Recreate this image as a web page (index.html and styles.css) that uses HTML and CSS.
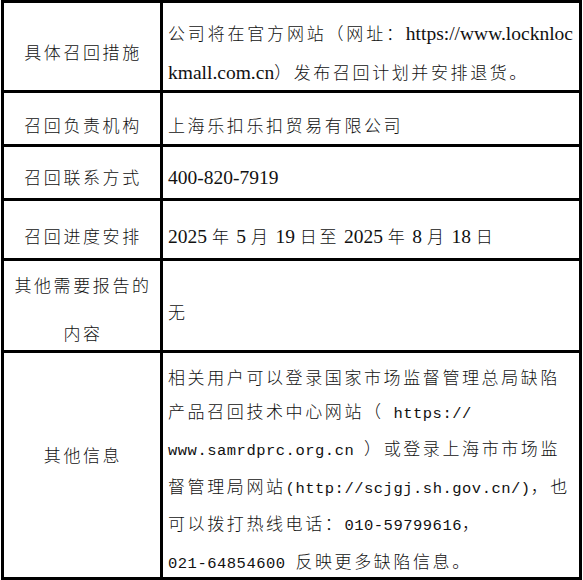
FILE: index.html
```html
<!DOCTYPE html>
<html lang="zh-CN">
<head>
<meta charset="utf-8">
<title>召回信息</title>
<link rel="stylesheet" href="styles.css">
</head>
<body>
<div class="sheet">
  <div class="cell label r1">具体召回措施</div>
  <div class="cell content r1">
    <div class="line just">公司将在官方网站（网址：<span class="tn">https://www.locknloc</span></div>
    <div class="line"><span class="tn">kmall.com.cn</span>）发布召回计划并安排退货。</div>
  </div>

  <div class="cell label r2">召回负责机构</div>
  <div class="cell content r2"><div class="line">上海乐扣乐扣贸易有限公司</div></div>

  <div class="cell label r3">召回联系方式</div>
  <div class="cell content r3"><div class="line"><span class="tn">400-820-7919</span></div></div>

  <div class="cell label r4">召回进度安排</div>
  <div class="cell content r4"><div class="line"><span class="tn">2025 </span>年<span class="tn"> 5 </span>月<span class="tn"> 19 </span>日至<span class="tn"> 2025 </span>年<span class="tn"> 8 </span>月<span class="tn"> 18 </span>日</div></div>

  <div class="cell label r5">
    <div class="line">其他需要报告的</div>
    <div class="line">内容</div>
  </div>
  <div class="cell content r5"><div class="line">无</div></div>

  <div class="cell label r6"><div class="line">其他信息</div></div>
  <div class="cell content r6">
    <div class="line">相关用户可以登录国家市场监督管理总局缺陷</div>
    <div class="line">产品召回技术中心网站（<span class="mono"> https://</span></div>
    <div class="line"><span class="mono">www.samrdprc.org.cn </span>）或登录上海市市场监</div>
    <div class="line">督管理局网站<span class="mono">(http://scjgj.sh.gov.cn/)</span>，也</div>
    <div class="line">可以拨打热线电话：<span class="mono">010-59799616</span>，</div>
    <div class="line"><span class="mono">021-64854600 </span>反映更多缺陷信息。</div>
  </div>
</div>
</body>
</html>
```
FILE: styles.css
```css
html, body {
  margin: 0;
  padding: 0;
  background: #ffffff;
}

.sheet {
  display: grid;
  grid-template-columns: 159px 419px;
  grid-template-rows: 90px 54px 54px 60px 92px 227px;
  width: max-content;
  margin-left: 1px;
  border-top: 3px solid #000;
  border-left: 3px solid #000;
  font-family: "Noto Sans CJK SC", sans-serif;
  font-weight: 300;
  font-size: 17px;
  letter-spacing: 2.6px;
  color: #111;
}

.cell {
  box-sizing: border-box;
  border-right: 3px solid #000;
  border-bottom: 3px solid #000;
  line-height: 26px;
  white-space: nowrap;
}

.label {
  text-align: center;
  padding-left: 2px;
}

.content {
  padding-left: 5px;
  padding-right: 6px;
}

.tn {
  font-family: "Liberation Serif", serif;
  font-weight: 400;
  font-size: 19.5px;
  letter-spacing: 0;
}

.mono {
  font-family: "Liberation Mono", monospace;
  font-weight: 400;
  font-size: 15.5px;
  letter-spacing: 0.5px;
}

.just {
  text-align: justify;
  text-align-last: justify;
}

.label.r1 { padding-top: 36px; }
.content.r1 { padding-top: 11px; line-height: 38px; }

.r2 { padding-top: 19px; }
.r3 { padding-top: 17px; }
.r4 { padding-top: 22px; }

.label.r5 { padding-top: 0; line-height: 48px; }
.content.r5 { padding-top: 38px; }

.label.r6 { padding-top: 89px; }
.content.r6 { padding-top: 7px; line-height: 33.6px; }
```
